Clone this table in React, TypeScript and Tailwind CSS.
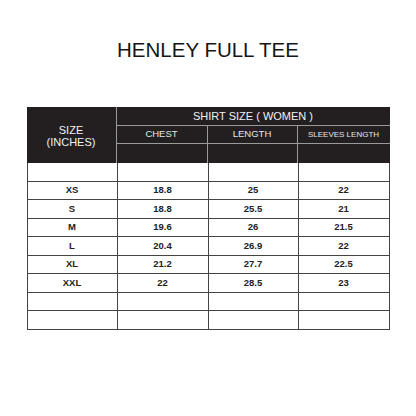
import React from "react";

const rows: [string, string, string, string][] = [
  ["", "", "", ""],
  ["XS", "18.8", "25", "22"],
  ["S", "18.8", "25.5", "21"],
  ["M", "19.6", "26", "21.5"],
  ["L", "20.4", "26.9", "22"],
  ["XL", "21.2", "27.7", "22.5"],
  ["XXL", "22", "28.5", "23"],
  ["", "", "", ""],
  ["", "", "", ""],
];

export default function App() {
  return (
    <div
      className="w-[416px] h-[416px] bg-white flex flex-col items-center"
      style={{ fontFamily: '"Liberation Sans", Arial, sans-serif' }}
    >
      <div className="mt-[38px] h-[24px] flex items-center text-[20.5px] text-[#151515] leading-none">
        HENLEY FULL TEE
      </div>
      <div className="mt-[45px] w-[363px] flex flex-col">
        {/* header */}
        <div className="flex bg-[#231f20] h-[56px]">
          <div className="w-[90px] border-r border-[#9a9a9a] flex flex-col items-center justify-center text-[11px] leading-[12px] text-[#f2f2f2] pt-[2px]">
            <span>SIZE</span>
            <span>(INCHES)</span>
          </div>
          <div className="flex-1 flex flex-col">
            <div className="h-[19px] border-b border-[#9a9a9a] flex items-center justify-center text-[11px] text-[#f2f2f2]">
              SHIRT SIZE ( WOMEN )
            </div>
            <div className="h-[18px] border-b border-[#9a9a9a] grid grid-cols-[91px_90px_1fr] text-[#e6e6e6]">
              <div className="border-r border-[#9a9a9a] flex items-center justify-center text-[9.5px]">CHEST</div>
              <div className="border-r border-[#9a9a9a] flex items-center justify-center text-[9.5px]">LENGTH</div>
              <div className="flex items-center justify-center text-[8px]">SLEEVES LENGTH</div>
            </div>
            <div className="flex-1 grid grid-cols-[91px_90px_1fr]">
              <div className="border-r border-[#9a9a9a]" />
              <div className="border-r border-[#9a9a9a]" />
              <div />
            </div>
          </div>
        </div>
        {/* body */}
        <div className="border-l border-r border-[#444] grid grid-cols-[90px_91px_90px_1fr]">
          {rows.map((r, i) =>
            r.map((c, j) => (
              <div
                key={`${i}-${j}`}
                className={`h-[18.55px] border-b border-[#444] flex items-center justify-center text-[9.5px] font-bold text-[#222] ${
                  j < 3 ? "border-r" : ""
                }`}
              >
                {c}
              </div>
            ))
          )}
        </div>
      </div>
    </div>
  );
}
